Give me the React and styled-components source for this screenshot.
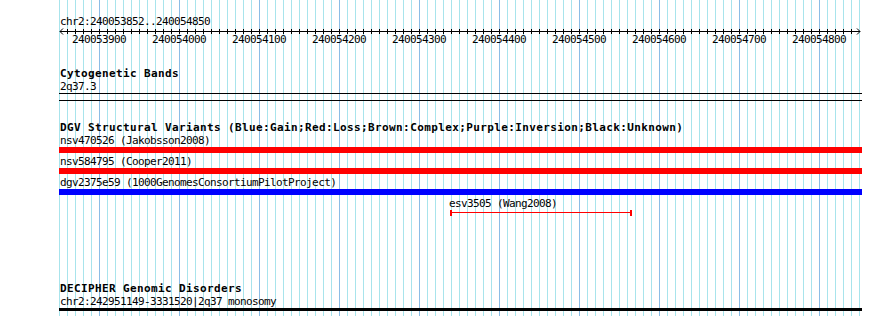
import React from "react";
import styled, { createGlobalStyle } from "styled-components";

const VIEW_START = 240053852;
const VIEW_END = 240054850;
const PX_PER_BP = 0.8;
const TRACK_WIDTH = 803;

const GlobalStyle = createGlobalStyle`
  html, body {
    margin: 0;
    padding: 0;
    background: #fff;
    overflow: hidden;
  }
  body {
    font-family: "DejaVu Sans Mono", "Liberation Mono", monospace;
    color: #000;
  }
`;

const Panel = styled.div`
  position: relative;
  margin-left: 59px;
  width: 801px;
  height: 316px;
  display: flex;
  flex-direction: column;
`;

// grid lines sit under every track
const GridLayer = styled.svg`
  position: absolute;
  top: 0;
  left: 0;
  z-index: 0;
`;

const SmallText = styled.div`
  font-size: 11px;
  line-height: 13px;
  height: 13px;
  letter-spacing: -0.62px;
  white-space: nowrap;
`;

const PositionLabel = styled(SmallText)`
  padding-left: 1px;
`;

const TrackTitle = styled.div`
  font-size: 11px;
  font-weight: bold;
  line-height: 13px;
  height: 13px;
  letter-spacing: 0.38px;
  white-space: nowrap;
  padding-left: 1px;
`;

const RulerTrack = styled.section`
  position: relative;
  display: flex;
  flex-direction: column;
  padding-top: 15px;
`;

const Axis = styled.svg`
  display: block;
  overflow: visible;
`;

const TickLabels = styled.div`
  display: flex;
`;

const TickLabel = styled(SmallText)`
  width: 80px;
  flex: none;
  text-align: center;
`;

const Track = styled.section`
  position: relative;
  display: flex;
  flex-direction: column;
  margin-top: ${(p) => p.$gap}px;
`;

const FeatureRow = styled.div`
  display: flex;
  flex-direction: column;
  & + & {
    margin-top: 2px;
  }
`;

const FeatureLabel = styled(SmallText)`
  padding-left: ${(p) => p.$indent ?? 1}px;
`;

const Bar = styled.div`
  flex: none;
  width: ${TRACK_WIDTH}px;
  height: ${(p) => p.$height}px;
  background: ${(p) => p.$color};
`;

const Span = styled.div`
  height: 6px;
  box-sizing: border-box;
  border-left: 2px solid ${(p) => p.$color};
  border-right: 2px solid ${(p) => p.$color};
  background: linear-gradient(
    to bottom,
    transparent 0 2px,
    ${(p) => p.$color} 2px 3px,
    transparent 3px
  );
`;

const BandBox = styled.div`
  flex: none;
  width: ${TRACK_WIDTH}px;
  height: 8px;
  box-sizing: border-box;
  border-top: 1px solid #000;
  border-bottom: 1px solid #000;
`;

const colors = { gain: "#0000ff", loss: "#ff0000", unknown: "#000000" };

const variants = [
  { id: "nsv470526", source: "Jakobsson2008", type: "loss", start: 239950000, end: 240210000 },
  { id: "nsv584795", source: "Cooper2011", type: "loss", start: 239980000, end: 240120000 },
  { id: "dgv2375e59", source: "1000GenomesConsortiumPilotProject", type: "gain", start: 240001000, end: 240090000 },
  { id: "esv3505", source: "Wang2008", type: "loss", start: 240054341, end: 240054568, thin: true },
];

function toX(bp) {
  const x = Math.round((bp - VIEW_START) * PX_PER_BP);
  return Math.min(Math.max(x, 0), TRACK_WIDTH);
}

function Grid() {
  const lines = [];
  for (let k = 0; k <= 100; k++) {
    const major = k % 10 === 5;
    lines.push(
      <line
        key={k}
        x1={k * 8 + 0.5}
        y1="0"
        x2={k * 8 + 0.5}
        y2="316"
        stroke={major ? "#8cbde6" : "#a8e4ec"}
      />
    );
  }
  return (
    <GridLayer width="801" height="316" shapeRendering="crispEdges">
      {lines}
    </GridLayer>
  );
}

function Ruler() {
  const ticks = [];
  for (let k = 1; k < 100; k++) ticks.push(k * 8 + 0.5);
  const labels = [];
  for (let bp = 240053900; bp <= VIEW_END; bp += 100) labels.push(bp);
  return (
    <RulerTrack>
      <PositionLabel>
        chr2:{VIEW_START}..{VIEW_END}
      </PositionLabel>
      <Axis width="801" height="5" shapeRendering="crispEdges">
        <line x1="1" y1="3.5" x2="801" y2="3.5" stroke="#000" />
        {ticks.map((x) => (
          <line key={x} x1={x} y1="1" x2={x} y2="6" stroke="#000" />
        ))}
        <polyline points="4,0.5 1,3.5 4,6.5" fill="none" stroke="#000" shapeRendering="auto" />
        <polyline points="798,0.5 801,3.5 798,6.5" fill="none" stroke="#000" shapeRendering="auto" />
      </Axis>
      <TickLabels>
        {labels.map((bp) => (
          <TickLabel key={bp}>{bp}</TickLabel>
        ))}
      </TickLabels>
    </RulerTrack>
  );
}

function Variant({ item }) {
  const left = toX(item.start);
  const width = toX(item.end) - left;
  const color = colors[item.type];
  return (
    <FeatureRow>
      <FeatureLabel $indent={Math.max(left - 1, 1)}>
        {item.id} ({item.source})
      </FeatureLabel>
      {item.thin ? (
        <Span $color={color} style={{ marginLeft: left, width }} />
      ) : (
        <Bar $color={color} $height={6} style={{ marginLeft: left, width }} />
      )}
    </FeatureRow>
  );
}

export default function App() {
  return (
    <>
      <GlobalStyle />
      <Panel>
        <Grid />
        <Ruler />
        <Track $gap={21}>
          <TrackTitle>Cytogenetic Bands</TrackTitle>
          <FeatureLabel>2q37.3</FeatureLabel>
          <BandBox />
        </Track>
        <Track $gap={20}>
          <TrackTitle>
            DGV Structural Variants (Blue:Gain;Red:Loss;Brown:Complex;Purple:Inversion;Black:Unknown)
          </TrackTitle>
          {variants.map((v) => (
            <Variant key={v.id} item={v} />
          ))}
        </Track>
        <Track $gap={66}>
          <TrackTitle>DECIPHER Genomic Disorders</TrackTitle>
          <FeatureLabel>chr2:242951149-3331520|2q37 monosomy</FeatureLabel>
          <Bar $color={colors.unknown} $height={3} />
        </Track>
      </Panel>
    </>
  );
}
